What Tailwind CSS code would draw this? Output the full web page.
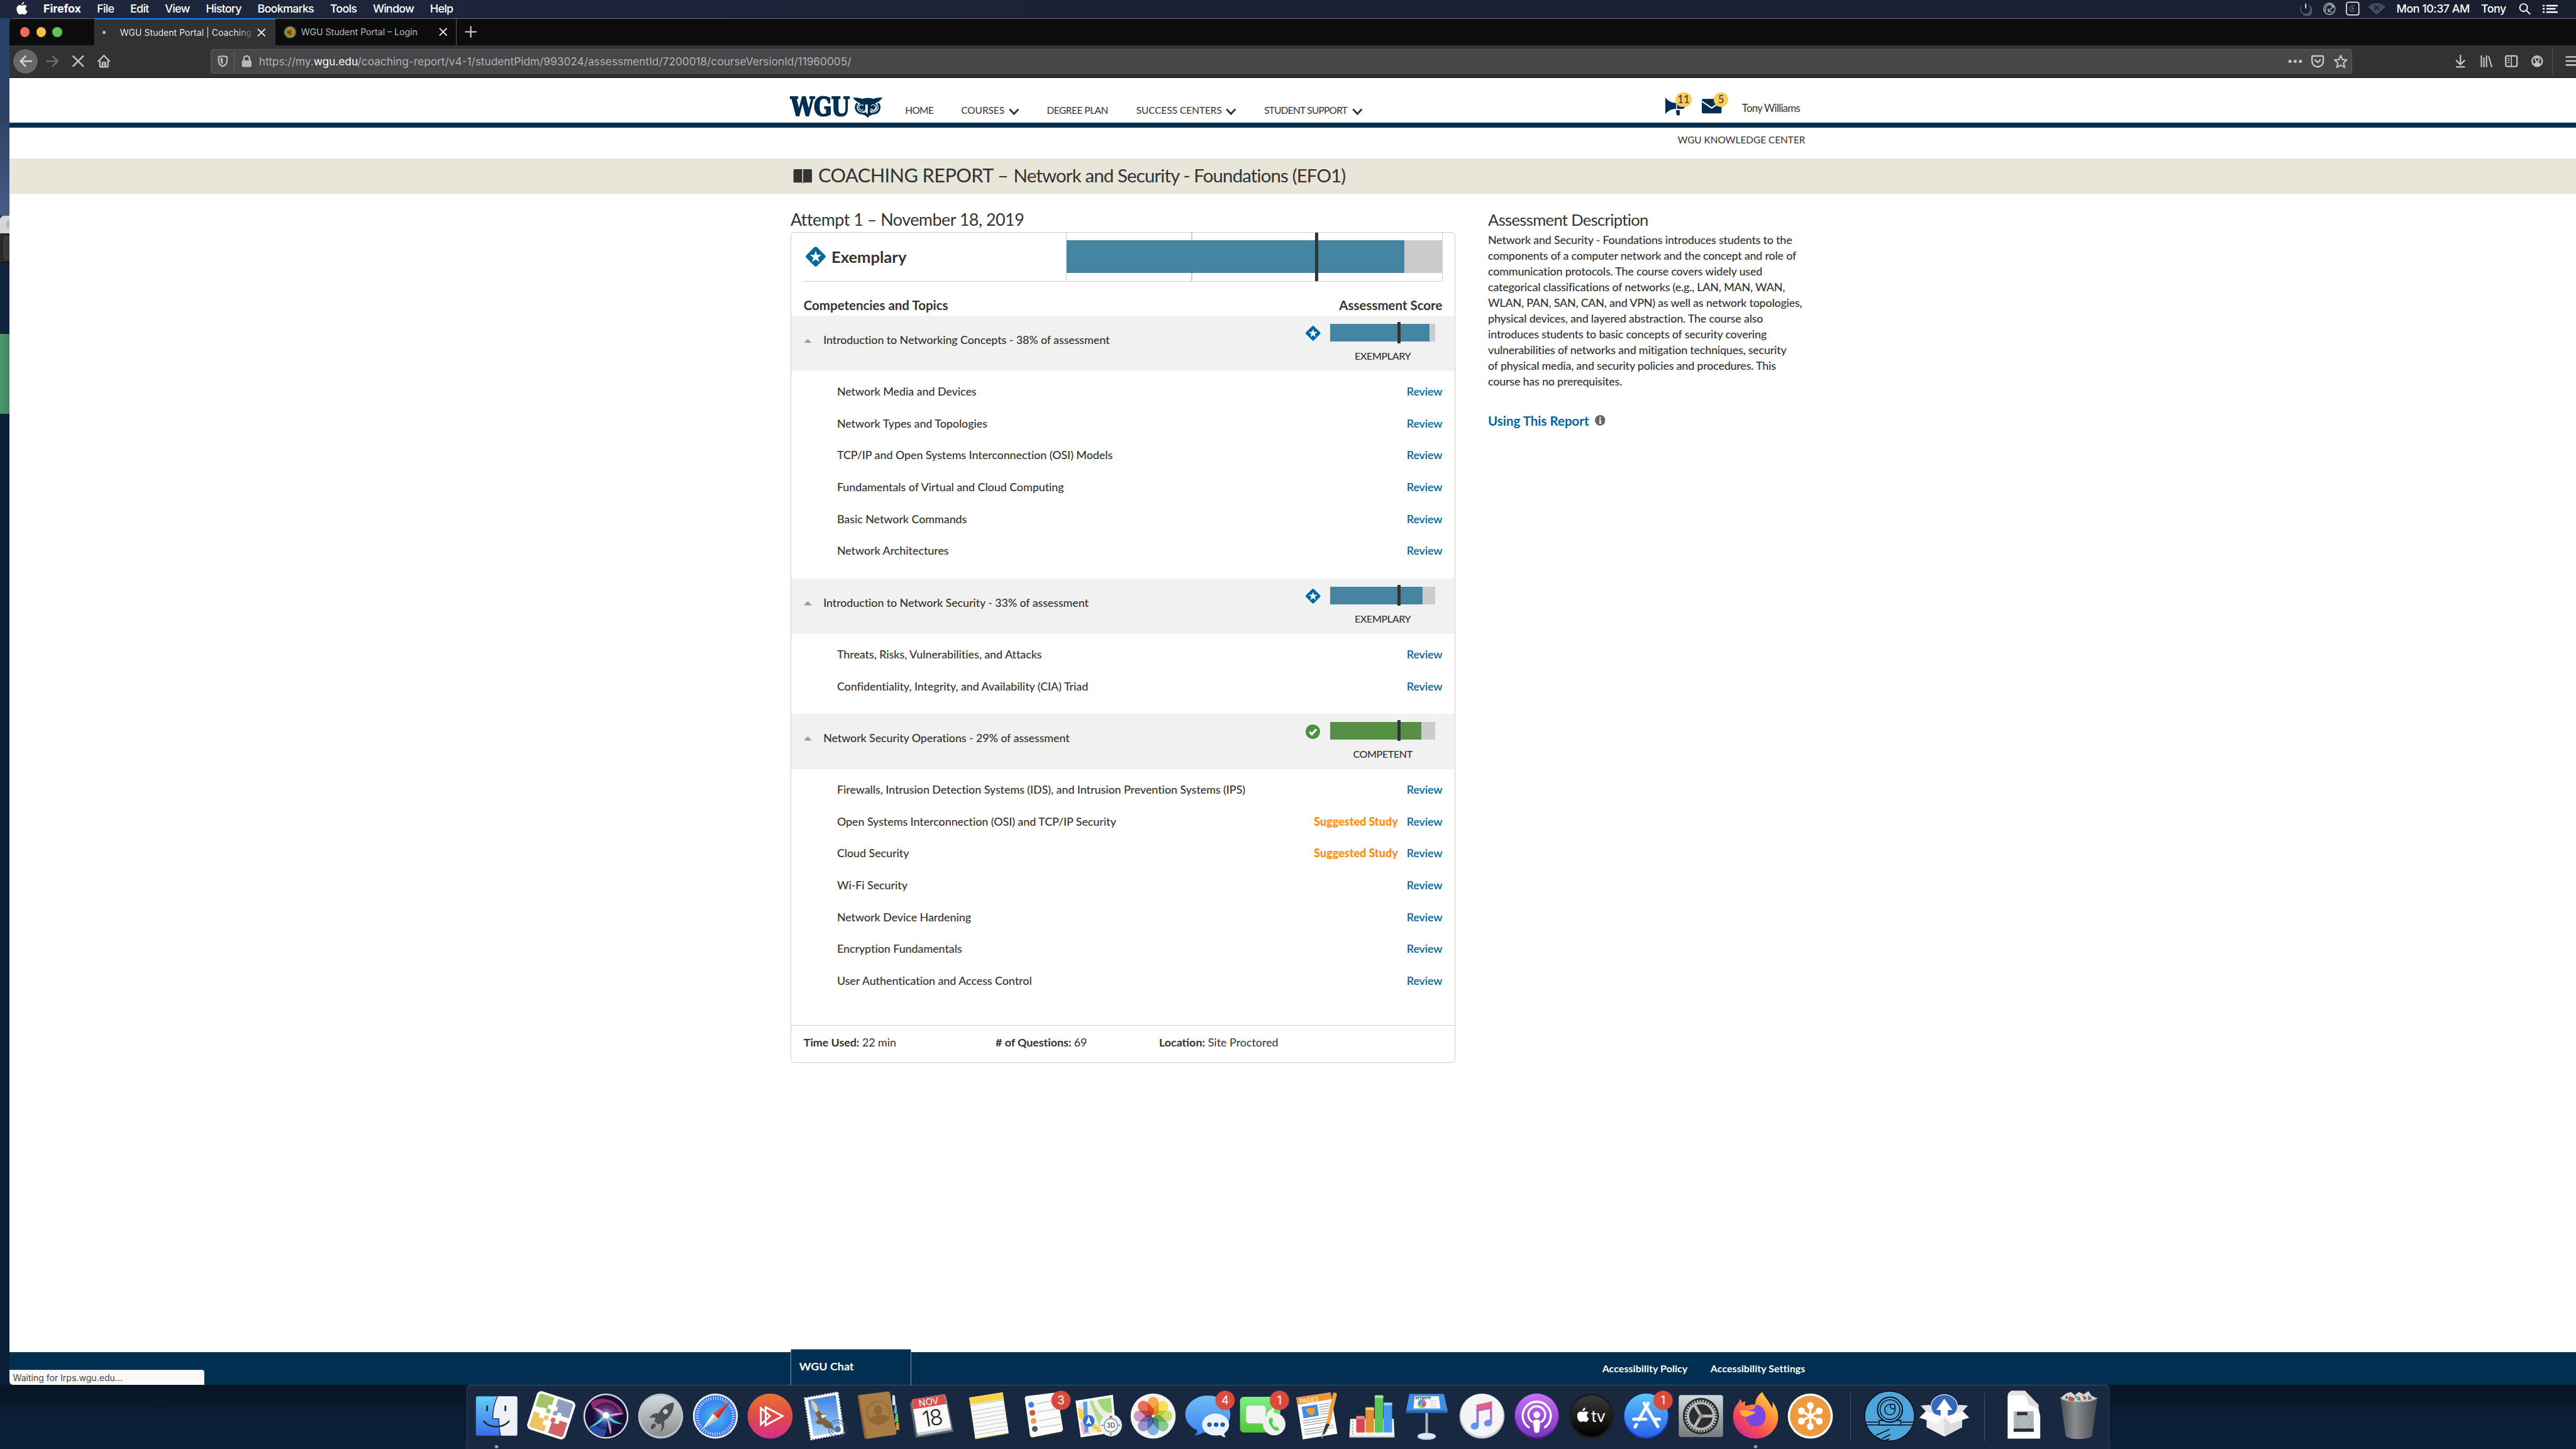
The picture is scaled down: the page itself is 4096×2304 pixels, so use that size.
<!DOCTYPE html>
<html lang="en">
<head>
<meta charset="utf-8">
<title>WGU Student Portal | Coaching Report</title>
<script src="https://cdn.jsdelivr.net/npm/@tailwindcss/browser@4"></script>
</head>
<body class="[zoom:1.28] w-[3200px] h-[1800px] overflow-hidden relative flex flex-col bg-[#0b2139] font-['Lato',sans-serif] text-[#333]">

<!-- macOS menu bar -->
<header class="h-[23px] shrink-0 bg-linear-to-r from-[#1d263c] to-[#191e2f] text-white text-[14px] leading-[22px] font-['Inter',sans-serif] font-medium tracking-[-0.600px] flex items-start">
  <svg class="ml-[20.5px] mt-[2px] w-[14px] h-[16px] shrink-0" viewBox="0 0 14 16" fill="#fff"><path d="M9.6 0c.1 1.8-1.300 3.500-3 3.500C6.400 1.800 8 .2 9.600 0zM7.200 4.700c.8 0 1.500-.8 3-.8 1.200 0 2.300.6 3 1.600-2.600 1.500-2.200 5 .6 6.100-.6 1.700-2 4.200-3.400 4.200-1.100 0-1.500-.7-2.900-.7s-1.800.7-2.900.7C2.600 15.800.3 12.200.3 9c0-3.100 1.900-5 4-5 1.300 0 2.200.7 2.900.7z"/></svg>
  <b class="ml-[19.500px] w-[48px] font-bold tracking-[-0.1px]">Firefox</b>
  <nav class="ml-[18.500px] flex gap-[20.200px]"><span>File</span><span>Edit</span><span>View</span><span>History</span><span>Bookmarks</span><span>Tools</span><span>Window</span><span>Help</span></nav>
  <div class="ml-auto flex items-start">
    <svg class="w-[16px] h-[22px] mr-[13px]" viewBox="0 0 16 22"><circle cx="8" cy="11.500" r="6.300" fill="none" stroke="#555a6a" stroke-width="1.300" stroke-dasharray="29 10" transform="rotate(-55 8 11.500)"/><path d="M8 4.500v6" stroke="#fff" stroke-width="1.300"/><path d="M14 9a6 6 0 0 1-9 8" fill="none" stroke="#555a6a" stroke-width="2.200"/></svg>
    <svg class="w-[17px] h-[22px] mr-[12px]" viewBox="0 0 17 22" fill="none" stroke="#a9adb8" stroke-width="1.200"><circle cx="8.500" cy="11" r="7"/><path d="M3.500 14C3 8.500 6 5 11.500 5.500c2.500.5 2.500 3.500 0 4.500L6.500 14M7 10.500v4h5M10 7l5 2"/></svg>
    <svg class="w-[17px] h-[22px] mr-[10px]" viewBox="0 0 17 22" fill="none"><rect x=".8" y="2.800" width="15.400" height="15.700" rx="2.500" stroke="#fff" stroke-width="1.200"/><path d="M11 8.200a3.600 3.600 0 1 0 0 5M8 9.500l2 1.200-2 1.200z" stroke="#565b6b" stroke-width="1.200"/></svg>
    <svg class="w-[22px] h-[22px] mr-[14px]" viewBox="0 0 22 22"><path d="M0 8.500C6 2.500 16 2.500 22 8.500L11 18.300z" fill="#474c5d"/><path d="M8 7l6 5.500M14 7l-6 5.500" stroke="#1a1f30" stroke-width="1.500"/></svg>
    <span class="w-[105px] tracking-[-0.400px]">Mon 10:37 AM</span>
    <span class="w-[46.500px] tracking-[-0.400px]">Tony</span>
    <svg class="w-[16px] h-[22px] mr-[14px]" viewBox="0 0 16 22" fill="none" stroke="#fff" stroke-width="1.500"><circle cx="6" cy="9.500" r="4.700"/><path d="M9.500 13l4.700 4.800"/></svg>
    <svg class="w-[19px] h-[22px] mr-[22.500px]" viewBox="0 0 19 22" fill="#fff"><path d="M0 6h2.500v2H0zM4.500 6H19v2H4.500zM0 10h2.500v2H0zM4.500 10H16v2H4.500zM0 14h2.500v2H0zM4.500 14H19v2H4.500z"/></svg>
  </div>
</header>

<div class="h-[1697px] shrink-0 flex">
  <!-- desktop showing beside the window -->
  <div class="w-[12px] shrink-0 flex flex-col">
    <div class="h-[245px] bg-linear-to-b from-[#27426d] via-[#2f4266] to-[#455c86]"></div>
    <div class="h-[22px] bg-[#d6d6d6] rounded-tl-[5px] flex justify-end items-center"><i class="w-[4px] h-[11px] rounded-l-full bg-[#b5b5b5]"></i></div>
    <div class="h-[36.500px] bg-[#29292a] border-b border-black flex justify-end items-center"><i class="w-[7px] h-[30px] rounded-l-[3px] border border-r-0 border-[#4b4b4b] bg-[#3a3a3c]"></i></div>
    <div class="h-[88px] bg-[#12233f]"></div>
    <div class="h-[99.500px] bg-linear-to-r from-[#4b976b] to-[#458560]"></div>
    <div class="flex-1 bg-linear-to-b from-[#0b2038] to-[#0a1f38]"></div>
  </div>

  <!-- Firefox window -->
  <div class="flex-1 min-w-0 relative flex flex-col bg-white rounded-tl-[5px] rounded-bl-[5px] overflow-hidden">
    <!-- tab strip -->
    <div class="h-[33px] shrink-0 bg-[#0c0c0d] border-t border-[#6f6f72] flex items-stretch font-['Inter',sans-serif] text-[11px] leading-[16px]">
      <div class="w-[106px] shrink-0 flex items-center gap-[8px] pl-[13px] border-r border-[#3c3c3e]">
        <i class="size-[12px] rounded-full bg-[#ed6a5e]"></i><i class="size-[12px] rounded-full bg-[#f5bf4f]"></i><i class="size-[12px] rounded-full bg-[#61c554]"></i>
      </div>
      <div class="w-[224px] shrink-0 -mt-px bg-[#323234] border-t-2 border-[#0a84ff] flex items-center text-[#f9f9fa] pl-[9px]">
        <i class="size-[4px] rounded-full bg-[#b9b9ba]"></i>
        <span class="ml-[18px] w-[164px] pt-px whitespace-nowrap bg-linear-to-r from-[#f9f9fa] from-88% to-[#5a5a5c] bg-clip-text text-transparent">WGU Student Portal | Coaching</span>
        <svg class="ml-[6px] size-[12px]" viewBox="0 0 12 12" stroke="#f9f9fa" stroke-width="1.300" stroke-linecap="round"><path d="M1.800 1.800l8.400 8.400M10.200 1.800l-8.400 8.400"/></svg>
      </div>
      <div class="w-[225.500px] shrink-0 border-r border-[#5a5a5c] flex items-center text-[#b9b9ba] pl-[10px]">
        <svg class="size-[16px]" viewBox="0 0 16 16"><circle cx="8" cy="8" r="7.300" fill="#b8841c" stroke="#1d4d70" stroke-width="1.400"/><circle cx="8" cy="8" r="5.800" fill="none" stroke="#d8c69a" stroke-width=".5" stroke-dasharray=".8 .8"/><path d="M4 5l1.300 4.500L7 5.500l1.300 4 1.500-4.500M10 10.500a2 2 0 1 1-.2-3M9 10h1.300" stroke="#3c3d2b" fill="none" stroke-width=".8"/></svg>
        <span class="ml-[6px] pt-px">WGU Student Portal – Login</span>
        <svg class="ml-auto mr-[10.500px] size-[12px]" viewBox="0 0 12 12" stroke="#f9f9fa" stroke-width="1.300" stroke-linecap="round"><path d="M1.800 1.800l8.400 8.400M10.200 1.800l-8.400 8.400"/></svg>
      </div>
      <svg class="ml-[9.500px] mt-[8.500px] size-[15px]" viewBox="0 0 15 15" stroke="#c4c4c5" stroke-width="1.800" stroke-linecap="round"><path d="M7.500 1v13M1 7.500h13"/></svg>
    </div>

    <!-- navigation toolbar -->
    <div class="h-[41px] shrink-0 bg-[#323234] border-b border-[#0c0c0d] flex items-center font-['Inter',sans-serif]">
      <div class="ml-[4px] size-[32px] rounded-full bg-[#676768] border border-[#232325] flex items-center justify-center">
        <svg class="size-[16px]" viewBox="0 0 16 16" fill="none" stroke="#d5d5d6" stroke-width="2" stroke-linecap="round" stroke-linejoin="round"><path d="M15 8H1.500M7.500 1.800L1.300 8l6.200 6.200"/></svg>
      </div>
      <svg class="ml-[9px] size-[16px]" viewBox="0 0 16 16" fill="none" stroke="#6d6d6f" stroke-width="2" stroke-linecap="round" stroke-linejoin="round"><path d="M1 8h13.500M8.500 1.800L14.700 8l-6.200 6.200"/></svg>
      <svg class="ml-[16px] size-[16px]" viewBox="0 0 16 16" fill="none" stroke="#c4c4c5" stroke-width="2" stroke-linecap="round"><path d="M1.800 1.800l12.400 12.400M14.200 1.800L1.800 14.200"/></svg>
      <svg class="ml-[16px] size-[16px]" viewBox="0 0 16 16" fill="none" stroke="#c4c4c5" stroke-width="1.800" stroke-linejoin="round" stroke-linecap="round"><path d="M1 8.200L8 1l7 7.200M3 8v6.300c0 .5.300.8.800.8h8.400c.5 0 .8-.3.800-.8V8M6 15v-4.500c0-.6.400-1 1-1h2c.6 0 1 .4 1 1V15"/><circle cx="8.700" cy="12.300" r=".4"/></svg>
      <div class="ml-[125px] w-[2661px] h-[30px] rounded-[3px] bg-[#474749] border border-[#5c5c5e] flex items-center text-[13.500px] text-[#b1b1b3]">
        <svg class="ml-[6px] size-[16px]" viewBox="0 0 16 16"><path d="M8 1.900c2 0 4.300.3 5.200.7v4.900c0 3.600-2.200 5.900-5.200 7-3-1.100-5.200-3.400-5.200-7V2.600C3.700 2.200 6 1.900 8 1.900z" fill="none" stroke="#b9b9ba" stroke-width="1.800"/><path d="M8 4.200c-1.200 0-2.200.1-2.800.3V7.500c0 2.400 1.100 3.600 2.800 4.600z" fill="#b9b9ba"/></svg>
        <i class="ml-[6px] w-px h-[21px] bg-[#6a6a6c]"></i>
        <svg class="ml-[7px] size-[16px]" viewBox="0 0 16 16"><path d="M4.500 8V5a3.500 3.500 0 0 1 7 0v3" fill="none" stroke="#b9b9ba" stroke-width="2"/><rect x="2" y="7" width="12" height="8.300" rx="1.500" fill="#b9b9ba"/></svg>
        <span class="ml-[7px] pt-[.5px] whitespace-nowrap">https://my.<span class="text-[#f9f9fa]">wgu.edu</span>/coaching-report/v4-1/studentPidm/993024/assessmentId/7200018/courseVersionId/11960005/</span>
        <svg class="ml-auto size-[18px]" viewBox="0 0 18 18" fill="#c4c4c5"><circle cx="2.500" cy="9" r="2"/><circle cx="9" cy="9" r="2"/><circle cx="15.500" cy="9" r="2"/></svg>
        <svg class="ml-[11px] size-[16px]" viewBox="0 0 16 16" fill="none" stroke="#c4c4c5" stroke-width="1.900" stroke-linejoin="round" stroke-linecap="round"><path d="M1 2.500c0-.6.400-1 1-1h12c.6 0 1 .4 1 1V8a7 7 0 0 1-14 0z"/><path d="M4.800 6.500L8 9.700l3.200-3.200"/></svg>
        <svg class="ml-[12px] mr-[5px] size-[17px]" viewBox="0 0 16 16" fill="none" stroke="#c4c4c5" stroke-width="1.600" stroke-linejoin="round"><path d="M8 1l2.100 4.700 5 .5-3.800 3.400 1.200 5.200L8 12.200l-4.500 2.600 1.200-5.200L.9 6.200l5-.5z"/></svg>
      </div>
      <svg class="ml-[126px] size-[16px]" viewBox="0 0 16 16" fill="none" stroke="#c4c4c5" stroke-width="1.800" stroke-linecap="round" stroke-linejoin="round"><path d="M8 .8v11M3 7.300l5 5 5-5M3 15.200h10"/></svg>
      <svg class="ml-[16px] size-[16px]" viewBox="0 0 16 16" fill="none" stroke="#c4c4c5" stroke-width="1.700" stroke-linecap="round"><path d="M2 1.500v13.300M5.200 4v10.800M8.400 1.500v13.300M11.200 2.500l3.600 12.300"/></svg>
      <svg class="ml-[16px] size-[16px]" viewBox="0 0 16 16" fill="none" stroke="#c4c4c5" stroke-width="1.800"><rect x="1" y="1.500" width="14" height="13" rx="1.800"/><path d="M8 2v12" stroke-width="1.300"/><path d="M3.300 4.700h2.500M3.300 7.200h2.500M3.300 9.700h2.500" stroke-width="1.200"/></svg>
      <svg class="ml-[16px] size-[16px]" viewBox="0 0 16 16"><circle cx="8" cy="8" r="6.300" fill="none" stroke="#c4c4c5" stroke-width="1.900"/><circle cx="8" cy="6" r="2.500" fill="none" stroke="#c4c4c5" stroke-width="1.600"/><path d="M3.500 12.500C4.500 10 6 9.300 8 9.300s3.500.7 4.500 3.200C10.500 15 5.500 15 3.500 12.500z" fill="#c4c4c5"/></svg>
      <i class="ml-[10px] w-px h-[34px] bg-[#555557]"></i>
      <svg class="ml-[15px] w-[14px] h-[14px] shrink-0" viewBox="0 0 14 14" stroke="#c4c4c5" stroke-width="2" stroke-linecap="round"><path d="M2 2h16M2 7h16M2 12h16"/></svg>
    </div>

    <!-- WGU site header -->
    <div class="h-[55px] shrink-0 flex items-start pl-[970px]">
      <div class="mt-[23.500px] w-[116px] h-[26px] flex shrink-0 text-[#002f51]">
        <span class="w-[77.500px] h-[26px] font-['DejaVu_Serif',serif] font-bold text-[31.500px] leading-[25px] tracking-[-1px] origin-left scale-x-[.84] [-webkit-text-stroke:1.500px_#002f51]">WGU</span>
        <svg class="w-[37px] h-[26px] mt-[.5px] shrink-0" viewBox="0 0 37 26"><g fill="none" stroke="#002f51" stroke-width="2.500"><path d="M5.800 7.200C1.500 12 4.500 19.800 12 19.800l4 1.500"/><path d="M31.200 7.200C35.500 12 32.500 19.800 25 19.800l-4 1.500"/></g><circle cx="11.300" cy="12.500" r="5" fill="#002f51"/><circle cx="25.900" cy="12.500" r="5" fill="#002f51"/><path d="M0 .3C4 0 8 .3 11.700 1.700 15 .2 22 0 25.300 1.700 29 .2 33 0 37 .3c-2.500 3.200-5.500 5.200-8.500 6.900L25 8.500c-3 1.500-4 4-3.500 7.500l1.500 4.700-4.500 4.600-4.300-4.600L15.500 16c.5-3.500-.5-6-3.500-7.500L8.500 7.200C5.500 5.500 2.500 3.500 0 .3z" fill="#002f51"/><path d="M14 10.200A3.300 3.300 0 1 0 13.500 15M23.400 10.200A3.300 3.300 0 1 1 23.900 15" transform="translate(-.6)" fill="none" stroke="#fff" stroke-width="1"/><path d="M28.500 10.500A3.300 3.300 0 1 1 23 13.500" fill="none" stroke="#fff" stroke-width="1"/><path d="M15.600 9.500c0-1.100 2.900-1.100 2.900 0V21l-2.900-3.200z" fill="#fff"/></svg>
      </div>
      <nav class="flex items-start pt-[30px] text-[12px] leading-[20px] whitespace-nowrap">
        <a class="ml-[26.500px] w-[36px] pt-[.5px] tracking-[-0.500px]">HOME</a>
        <a class="ml-[33.500px] w-[59px]">COURSES</a>
        <svg class="mt-[7.500px] w-[13px] h-[9px]" viewBox="0 0 13 9" fill="none" stroke="#333" stroke-width="2.200"><path d="M1 1.200l5.500 5.900L12 1.200"/></svg>
        <a class="ml-[34.500px] w-[77px] pt-[.5px] tracking-[-0.340px]">DEGREE PLAN</a>
        <a class="ml-[34px] w-[111.500px]">SUCCESS CENTERS</a>
        <svg class="mt-[7.500px] w-[13px] h-[9px]" viewBox="0 0 13 9" fill="none" stroke="#333" stroke-width="2.200"><path d="M1 1.200l5.500 5.900L12 1.200"/></svg>
        <a class="ml-[34.500px] w-[109.500px] tracking-[-0.530px]">STUDENT SUPPORT</a>
        <svg class="mt-[7.500px] w-[13px] h-[9px]" viewBox="0 0 13 9" fill="none" stroke="#333" stroke-width="2.200"><path d="M1 1.200l5.500 5.900L12 1.200"/></svg>
      </nav>
      <div class="ml-[374px] mt-[18px] w-[47px] h-[30px] relative">
        <svg class="w-[26px] h-[30px]" viewBox="0 0 26 30" fill="#002f51"><path d="M1.500 6.300c3.500 4.500 8 6.800 13.500 6.800V20.500c-5.500 0-10 2-13.500 6.500zM16.200 13.100h6.300a3.500 3.500 0 0 1 0 7.400h-6.300zM14.500 22h5v5.500c0 1.500-3.500 1.500-4 0z"/></svg>
        <span class="absolute left-[14px] top-0 w-[21px] h-[18px] rounded-full bg-[#fdcb5a] text-[13px] leading-[18px] text-center">11</span>
      </div>
      <div class="mt-[18px] w-[50px] h-[30px] relative">
        <svg class="w-[25px] h-[27px]" viewBox="0 0 25 27"><rect y="8" width="24.500" height="18" rx="2" fill="#002f51"/><path d="M0 11l12.200 8.300L24.500 11" fill="none" stroke="#fff" stroke-width="1.600"/></svg>
        <span class="absolute left-[15px] top-0 w-[18px] h-[18px] rounded-full bg-[#fdcb5a] text-[13px] leading-[18px] text-center">5</span>
      </div>
      <span class="mt-[28px] text-[13px] leading-[20px] tracking-[-0.500px] whitespace-nowrap">Tony Williams</span>
    </div>
    <div class="h-[7px] shrink-0 bg-[#002f51]"></div>
    <div class="h-[38px] shrink-0 pr-[957.500px] pt-[5px] text-right text-[12px] leading-[20px]">WGU KNOWLEDGE CENTER</div>
    <div class="h-[44px] shrink-0 bg-[#e8e5d9] pl-[973px] pb-[1.500px] flex items-center text-[24px] leading-[28px] whitespace-nowrap">
      <svg class="w-[24px] h-[18px] mt-[2.500px] mr-[7.500px]" viewBox="0 0 24 18" fill="#333"><path d="M2 0h8.500c.6 0 .9.400.9.900V16.500l.3.300h.6l.3-.3V.900c0-.5.300-.9.900-.9H22c1 0 1.500.6 1.500 1.500v13.700c0 .9-.6 1.500-1.500 1.500h-8.500c-.3.900-2.700.9-3 0H2c-.9 0-1.500-.6-1.500-1.500V1.500C.5.600 1 0 2 0z"/></svg>
      <span class="w-[222.500px] tracking-[-0.450px]">COACHING REPORT</span><span class="w-[20px]">–</span><span class="text-[23px] tracking-[-0.670px]">Network and Security - Foundations (EFO1)</span>
    </div>

    <!-- report -->
    <div class="flex-1 pl-[970px] pt-[19px] flex items-start">
      <section class="w-[826px]">
        <h2 class="h-[28px] pt-[1px] text-[21px] leading-[24px] tracking-[-0.390px]">Attempt 1 – November 18, 2019</h2>
        <div class="h-[1032px] border border-[#ccc] rounded-[5px] flex flex-col">
          <div class="ml-[15.500px] w-[794px] h-[61px] border-b border-[#ccc] flex">
            <div class="w-[326px] flex items-center pl-[2.500px] text-[20px] font-bold pt-[.5px]">
              <svg class="size-[25px] mr-[7px]" viewBox="0 0 24 24"><path d="M10.500.8a2.200 2.200 0 0 1 3 0l9.700 9.700a2.200 2.200 0 0 1 0 3l-9.700 9.700a2.200 2.200 0 0 1-3 0L.8 13.500a2.200 2.200 0 0 1 0-3z" fill="#0067a0"/><path d="M12 5l1.700 4.900 5.300.1-4.200 3.200 1.500 5.100L12 15.300l-4.300 3 1.500-5.100L5 10l5.300-.1z" fill="#fff"/></svg>Exemplary
            </div>
            <div class="flex-1 relative border-x border-[#ccc] flex items-center">
              <i class="absolute left-[155px] inset-y-0 w-px bg-[#ccc]"></i>
              <div class="relative w-full h-[41px] bg-[#ccc]"><div class="h-full bg-[#4585a1]" style="width:90%"></div></div>
              <i class="absolute left-[308.500px] inset-y-0 w-[4px] bg-[#333]"></i>
            </div>
          </div>
          <div class="mx-[15.500px] h-[42.500px] pt-[19.500px] flex justify-between text-[16px] leading-[20px] font-bold"><span>Competencies and Topics</span><span>Assessment Score</span></div>
          <div id="sections"></div>
          <div class="flex-1 border-t border-[#ccc] flex pt-[11px] pl-[15.500px] text-[14px] leading-[20px]">
            <span class="w-[238.500px] tracking-[-0.050px]"><b>Time Used:</b> 22 min</span><span class="w-[203px] tracking-[-0.050px]"><b># of Questions:</b> 69</span><span><b>Location:</b> Site Proctored</span>
          </div>
        </div>
      </section>
      <aside class="ml-[40.500px] w-[420px]">
        <h2 class="h-[28.500px] pt-[1px] text-[20px] leading-[24px] tracking-[-0.520px]">Assessment Description</h2>
        <p class="text-[14px] font-medium leading-[19.560px] tracking-[-0.160px] whitespace-nowrap">Network and Security - Foundations introduces students to the<br>components of a computer network and the concept and role of<br>communication protocols. The course covers widely used<br>categorical classifications of networks (e.g., LAN, MAN, WAN,<br>WLAN, PAN, SAN, CAN, and VPN) as well as network topologies,<br>physical devices, and layered abstraction. The course also<br>introduces students to basic concepts of security covering<br>vulnerabilities of networks and mitigation techniques, security<br>of physical media, and security policies and procedures. This<br>course has no prerequisites.</p>
        <div class="mt-[29.500px] flex items-center text-[16px] leading-[20px] font-bold text-[#0067a0]">Using This Report
          <svg class="ml-[7px] mb-[2px] size-[13px]" viewBox="0 0 13 13"><circle cx="6.500" cy="6.500" r="6.500" fill="#666"/><circle cx="6.500" cy="3.400" r="1.150" fill="#fff"/><path d="M5 5.400h2.500v4.300h.8v1H5v-1h.7V6.400H5z" fill="#fff"/></svg>
        </div>
      </aside>
    </div>

    <!-- site footer -->
    <footer class="h-[40px] shrink-0 bg-[#002f51] flex items-center justify-end pr-[957.500px] gap-[28.500px] text-[12.500px] tracking-[0.040px] font-bold text-white">
      <span>Accessibility Policy</span><span>Accessibility Settings</span>
    </footer>
    <div class="absolute left-[970px] bottom-0 w-[150px] h-[44.500px] bg-[#002f51] border border-b-0 border-[#7f97a8] rounded-t-[2px] pl-[10px] pt-[11.500px] text-[14px] leading-[20px] font-bold text-white">WGU Chat</div>
    <div class="absolute left-0 bottom-0 w-[242px] h-[18.500px] bg-[#f9f9fa] border-t border-r border-[#d0d4d8] rounded-tr-[3px] pl-[4px] font-['Inter',sans-serif] text-[11px] leading-[18.500px] text-[#454545]">Waiting for lrps.wgu.edu...</div>
  </div>
</div>

<!-- dock area -->
<div class="h-[80px] shrink-0 bg-linear-to-b from-[#081624] via-[#0a1e35] to-[#0b2139] pl-[580px]">
  <div id="dock" class="w-[2040.500px] h-[82px] bg-[#182840] border border-b-0 border-t-[#475161] border-x-[#35435a] rounded-t-[5px] flex pl-[2px] font-['Inter',sans-serif]">
    <svg class="w-[68px] h-[80px] shrink-0" viewBox="0 0 68 80"><defs><linearGradient id="fi" x2="0" y2="1"><stop stop-color="#62cff9"/><stop offset="1" stop-color="#3a6bea"/></linearGradient></defs><rect x="8.400" y="13.500" width="51.400" height="48.800" rx="2" fill="url(#fi)"/><path d="M35.200 13.500C31 22 29.500 32 29.400 41.300H37c0 7.700.5 14.700 2.200 21h18.600a2 2 0 0 0 2-2V15.500a2 2 0 0 0-2-2z" fill="#eef1f6"/><path d="M22.300 26v5M45 26v5" stroke="#1c2a3a" stroke-width="2.200" stroke-linecap="round"/><path d="M29.400 41.300H37c0 7.700.5 14.700 2.200 21M35.200 13.500C31 22 29.500 32 29.400 41.300" fill="none" stroke="#1c2a3a" stroke-width="1"/><path d="M18 44.500c8 9 23.500 9 31.500 0" fill="none" stroke="#1c2a3a" stroke-width="2" stroke-linecap="round"/><ellipse cx="34" cy="76" rx="2.200" ry="2" fill="#8fa3bf"/></svg>
    <svg class="w-[68px] h-[80px] shrink-0" viewBox="0 0 68 80"><g transform="rotate(18 34 37)"><rect x="9" y="12" width="50" height="50" rx="6" fill="#fff"/><path d="M12 18a3 3 0 0 1 3-3h16v17H12z" fill="#a2c46c"/><path d="M36 15h17a3 3 0 0 1 3 3v16H36z" fill="#8f9fbf"/><path d="M12 39h20v20H15a3 3 0 0 1-3-3z" fill="#edc462"/><path d="M37 40h19v16a3 3 0 0 1-3 3H37z" fill="#d16468"/><path d="M27 25h12v6h7v14H37v6H27v-7h-7V31h7z" fill="#fff"/><circle cx="29" cy="33" r="3" fill="#a2c46c"/><circle cx="38" cy="33" r="3" fill="#8f9fbf"/><circle cx="29" cy="42" r="3" fill="#edc462"/><circle cx="38" cy="42" r="3" fill="#d16468"/></g></svg>
    <svg class="w-[68px] h-[80px] shrink-0" viewBox="0 0 68 80"><defs><radialGradient id="si"><stop stop-color="#fff"/><stop offset=".25" stop-color="#8fd0e6"/><stop offset=".6" stop-color="#3c3a8c"/><stop offset="1" stop-color="#150f38"/></radialGradient></defs><circle cx="34" cy="38" r="28" fill="#d5d7db"/><circle cx="34" cy="38" r="26" fill="#170f35"/><path d="M15 21c12-9 34-4 41 14-8 4-14 4-22 4S17 32 15 21z" fill="#b8367e" opacity=".75"/><path d="M12 52c8-2 14-9 22-12 2 8 1 18-2 23-8 0-16-4-20-11z" fill="#2d5cc0" opacity=".8"/><circle cx="34" cy="38" r="17" fill="url(#si)" opacity=".6"/><path d="M13 52c10-6 16-12 21-18 5 6 13 12 22 14-10 0-16-3-22-9-6 6-12 11-21 13z" fill="#5ef0dc" opacity=".85"/><path d="M34 38c-3-6-9-10-15-10 5 5 10 9 15 10zm0 0c3 8 3 16 6 23 2-9-1-17-6-23zm0 0c5-2 12-5 22-3-8 2-15 4-22 3z" fill="#e3b5e8" opacity=".85"/><circle cx="34" cy="37" r="4" fill="#fff"/></svg>
    <svg class="w-[68px] h-[80px] shrink-0" viewBox="0 0 68 80"><defs><linearGradient id="la" x2="0" y2="1"><stop stop-color="#d3dde2"/><stop offset="1" stop-color="#8b8d8d"/></linearGradient></defs><circle cx="34" cy="38" r="28" fill="#b9c3c8"/><circle cx="34" cy="38" r="25.500" fill="url(#la)"/><path d="M50.500 21c-9 1-15 6-19 13.500-5-.5-9 1.500-11.500 6 3-1 5.500-.8 7.500.2l-1.500 4 5 3.800 3.500-1.500c1.300 2.500 1 6.500-1.500 11 5-3 6.500-8 5-13.500 8-5.500 12.500-13 12.500-23.500zM25.500 47c-3 1-4 4-3.500 7.500 3-.5 5.500-2.500 6.500-5.500z" fill="#4d5254"/><circle cx="40" cy="32.500" r="3.800" fill="#bfcace" stroke="#34393b"/></svg>
    <svg class="w-[68px] h-[80px] shrink-0" viewBox="0 0 68 80"><defs><radialGradient id="sa"><stop stop-color="#51c3ea"/><stop offset="1" stop-color="#2e6ef0"/></radialGradient></defs><circle cx="34" cy="38" r="28" fill="#e6e8ea"/><circle cx="34" cy="38" r="25.700" fill="url(#sa)"/><circle cx="34" cy="38" r="22.500" fill="none" stroke="#e9f3fb" stroke-width="4" stroke-dasharray=".9 2.040"/><path d="M51.500 20.500L37.600 41.300 31 35z" fill="#e8443d"/><path d="M51.500 20.500L37.600 41.300 34.300 38z" fill="#c42c2b"/><path d="M17 55l13.800-20 6.800 6.300z" fill="#f4f4f4"/><path d="M17 55l17.300-17 3.300 3.300z" fill="#b9bcc0"/></svg>
    <svg class="w-[68px] h-[80px] shrink-0" viewBox="0 0 68 80"><defs><linearGradient id="pl" x2="0" y2="1"><stop stop-color="#e8742f"/><stop offset=".5" stop-color="#e04a4a"/><stop offset="1" stop-color="#d2308c"/></linearGradient></defs><circle cx="34" cy="38" r="28" fill="url(#pl)"/><path d="M28.500 27v22.500L49.500 38zM22.500 28v20.500l11.500-10.500z" fill="none" stroke="#fff" stroke-width="2.200"/></svg>
    <svg class="w-[68px] h-[80px] shrink-0" viewBox="0 0 68 80"><defs><linearGradient id="ma" x2="0" y2="1"><stop stop-color="#3f80de"/><stop offset="1" stop-color="#a7d5f6"/></linearGradient></defs><path d="M9 16L50 8.500 57.500 59.500 17 67z" fill="#fff" stroke="#fff" stroke-width="2" stroke-dasharray="2.200 1.300"/><path d="M13 18L47.500 12 53.500 57 20 63z" fill="url(#ma)"/><path d="M17 18c5 2 8 6 10 14l4 4 4-1 1 3-2 3c6 3 11 9 12 15-2-1-3-2-4-3-4 1-9-1-11-5-4 1-7 0-9-2 2-2 4-3 4-5-4-6-8-15-9-23z" fill="#7c623e"/><path d="M17 18c5 2 8 6 9 13l-3 3c-4-5-6-10-6-16z" fill="#d9cbb0"/><path d="M29 37l6-1 1 2-5 3z" fill="#f3eee4"/><circle cx="50" cy="54" r="11" fill="none" stroke="#35506f" stroke-width="1.200" opacity=".7"/><circle cx="50" cy="54" r="8" fill="none" stroke="#35506f" opacity=".6"/><circle cx="50" cy="54.500" r="4" fill="#35506f" opacity=".7"/></svg>
    <svg class="w-[68px] h-[80px] shrink-0" viewBox="0 0 68 80"><path d="M50 12l3 .5 1 12h-4z" fill="#dfe6ea"/><path d="M53 24l2 .5.8 10H52z" fill="#59b9e0"/><path d="M54 35l3 .5.5 10H53z" fill="#5fc45c"/><path d="M55 46l3 .5L58.500 55H54z" fill="#e6941f"/><path d="M7 14c0-1 .8-2 2-2L44 7.500c2 0 3 1 3.200 3L55 58c0 2-1 3-2 3.400L18 66.300c-1.500 0-2.500-.5-2.800-2z" fill="#a97c45"/><path d="M7 14l2 .3 9 52c-1.500 0-2.500-.5-2.800-2z" fill="#8a6233"/><circle cx="32.500" cy="34" r="14.300" fill="none" stroke="#8e6737" stroke-width="1.300"/><ellipse cx="32" cy="30.500" rx="5" ry="5.800" fill="#8e6737"/><path d="M21.500 42c4-5.500 18-7.500 23-3-2.500 9.500-18 12.500-23 3z" fill="#8e6737"/></svg>
    <svg class="w-[68px] h-[80px] shrink-0" viewBox="0 0 68 80"><path d="M3.500 21L49 13l9 44.500L11 65z" fill="#5d6670"/><path d="M6 17.500L47 11l8.500 44-42 7.500z" fill="#c9cdd0"/><path d="M6 17.500L47 11l8 41-42.500 7z" fill="#fbfbfb"/><path d="M6 17.500L47 11l2 12L8 29.500z" fill="#d8504b"/><g transform="rotate(-9 28 40)"><text x="30" y="24.500" font-size="11.500" fill="#fff" text-anchor="middle">NOV</text><text x="31" y="50.500" font-size="27" font-weight="300" fill="#222" text-anchor="middle" letter-spacing="-1.500">18</text></g></svg>
    <svg class="w-[68px] h-[80px] shrink-0" viewBox="0 0 68 80"><path d="M9.500 15.500L51 8.500 58.500 60 17 67z" fill="#b58f25"/><path d="M9.500 15L51 8.500 58.500 59 17 66z" fill="#fafafa"/><path d="M9.500 15L51 8.500l1.500 8.500L10.800 23.500z" fill="#f6d34b"/><path d="M11 25l41.500-7" stroke="#888" stroke-width=".8" stroke-dasharray="1 1"/><path d="M12.500 32l41.500-7M13.300 37l41.500-7M14 42l41.500-7M14.800 47l41-7M15.500 52l41-7M16 57l41-7M16.500 61.500l41-7" stroke="#c4c4c4" stroke-width=".8"/></svg>
    <svg class="w-[68px] h-[80px] shrink-0" viewBox="0 0 68 80"><path d="M12 15L50 9l9 48c0 2-1 3-3 3.500L20 66.500c-2 0-3-1-3-2.500z" fill="#2b2b2b"/><path d="M10.500 16c0-1.500 1-2.500 2.500-3L47.500 9c2-.2 3 .8 3.500 2.500L58 54c0 2-1 3-2.500 3.500L20 64.500c-1.500 0-2.500-1-3-2.500z" fill="#fafafa"/><path d="M24 23l25-5M26 33l25-4M28 44l26-5M30 52l26-4" stroke="#c2c2c2"/><circle cx="18.500" cy="24" r="3.600" fill="#3f7df0"/><circle cx="20" cy="34" r="3.600" fill="#d8534a"/><circle cx="21.500" cy="44" r="3.600" fill="#e6a14a"/><circle cx="23" cy="54" r="3.600" fill="#54585f"/><circle cx="55.500" cy="18.500" r="12" fill="#d94a3d"/><text x="55.500" y="23.600" font-size="14.500" fill="#fff" text-anchor="middle">3</text></svg>
    <svg class="w-[68px] h-[80px] shrink-0" viewBox="0 0 68 80"><path d="M5.500 19L52 11.500 56 58 12 64.500z" fill="#fff"/><path d="M8.500 21.500L49.500 15 53 55.500 14.500 61z" fill="#efece6"/><path d="M33 17.500L49.500 15l1.500 19c-9 0-15-6-18-16.500z" fill="#a3d77f"/><path d="M27 18.500c4 14 12 22 25 27v10L35 58c2-11-8-24-12-39z" fill="#a3d77f" opacity=".8"/><path d="M8.500 28l7 2 9 14 17 13-8 1-12-10L10 40z" fill="#f6cf4e"/><path d="M11 44l9 8 3 8-8.500 1z" fill="#f4b7c2"/><path d="M15 20.500l5-.8 1.500 38-4.500.8z" fill="#5f9be0"/><circle cx="22" cy="44" r="7.300" fill="#2d72d3"/><path d="M22 38.500l-3.500 10 3.500-2 3.500 2z" fill="#fff"/><circle cx="49.500" cy="49.500" r="13.700" fill="#eef0f2"/><circle cx="49.500" cy="49.500" r="8.300" fill="#fff" stroke="#7ca4b5" stroke-width="1.400"/><path d="M49.500 37l2 3h-4z" fill="#e02020"/><path d="M49.500 59v2.500M38 49.500h2M59 49.500h2" stroke="#333"/><text x="49.500" y="52.500" font-size="8" fill="#222" text-anchor="middle">3D</text></svg>
    <svg class="w-[68px] h-[80px] shrink-0" viewBox="0 0 68 80"><circle cx="34" cy="38" r="28" fill="#f3f3f2"/><g opacity=".9"><rect x="27" y="14" width="14" height="23" rx="7" fill="#f5a13a"/><rect class="mix-blend-multiply" x="27" y="14" width="14" height="23" rx="7" fill="#f3e04a" transform="rotate(45 34 38)"/><rect class="mix-blend-multiply" x="27" y="14" width="14" height="23" rx="7" fill="#c3dd62" transform="rotate(90 34 38)"/><rect class="mix-blend-multiply" x="27" y="14" width="14" height="23" rx="7" fill="#7cc48a" transform="rotate(135 34 38)"/><rect class="mix-blend-multiply" x="27" y="14" width="14" height="23" rx="7" fill="#73abe0" transform="rotate(180 34 38)"/><rect class="mix-blend-multiply" x="27" y="14" width="14" height="23" rx="7" fill="#9088c8" transform="rotate(225 34 38)"/><rect class="mix-blend-multiply" x="27" y="14" width="14" height="23" rx="7" fill="#c98fc3" transform="rotate(270 34 38)"/><rect class="mix-blend-multiply" x="27" y="14" width="14" height="23" rx="7" fill="#e8604c" transform="rotate(315 34 38)"/></g><circle cx="34" cy="38" r="1.500" fill="#fff"/></svg>
    <svg class="w-[68px] h-[80px] shrink-0" viewBox="0 0 68 80"><defs><linearGradient id="me" x2="0" y2="1"><stop stop-color="#6fbdf5"/><stop offset="1" stop-color="#3b82f4"/></linearGradient></defs><path d="M34 12.500c15.500 0 28 10.500 28 23.500S49.500 59 34 59c-2 0-4-.2-6-.5-2.500 2-6 3.300-10.500 3.500 2.500-2 3.500-4 3.500-6.300C12 52 6 44.500 6 36c0-13 12.500-23.500 28-23.500z" fill="url(#me)"/><path d="M43.500 35c9.500 0 17 6 17 13.700 0 4.500-2.500 8.300-6 10.800 0 2 .8 3.500 2 5-3-.5-5.500-1.500-7-3-2 .5-4 .7-6 .7-9.500 0-16.500-6-16.500-13.500S34 35 43.500 35z" fill="#e9f1f9"/><circle cx="36" cy="48.700" r="2.800" fill="#27579f"/><circle cx="44.300" cy="48.700" r="2.800" fill="#27579f"/><circle cx="52.500" cy="48.700" r="2.800" fill="#27579f"/><circle cx="55.500" cy="18.500" r="12" fill="#d94a3d"/><text x="55.500" y="23.600" font-size="14.500" fill="#fff" text-anchor="middle">4</text></svg>
    <svg class="w-[68px] h-[80px] shrink-0" viewBox="0 0 68 80"><defs><linearGradient id="ft" x2="0" y2="1"><stop stop-color="#7df08a"/><stop offset="1" stop-color="#53c637"/></linearGradient></defs><rect x="6" y="14" width="50" height="44.500" rx="5" fill="url(#ft)"/><rect x="13.500" y="25" width="24.500" height="22" rx="4" fill="#f2f3f1"/><path d="M39.500 33.500L48 27v18l-8.500-6z" fill="#f2f3f1"/><circle cx="48.500" cy="48" r="14" fill="#eef1ee"/><path d="M44 40c-3 1.500-3 5 0 10s7 7.500 10 5.500l1-1.500-3.500-3-2 1c-2-1.500-3.500-4-3.800-6l1.500-1.500-1-4.500z" fill="#53cf4b"/><circle cx="55" cy="18.500" r="12" fill="#d94a3d"/><text x="55" y="23.600" font-size="14.500" fill="#fff" text-anchor="middle">1</text></svg>
    <svg class="w-[68px] h-[80px] shrink-0" viewBox="0 0 68 80"><path d="M8 15L50.500 8.500 59 60 16 67z" fill="#fdfdfd"/><path d="M8 15L50.500 8.500l1.500 8.500L9.500 24z" fill="#f0953a"/><g transform="rotate(-9 20 20)"><text x="12" y="21.500" font-size="7.500" fill="#fff">PAGES</text></g><path d="M14.500 26.500L34 23.500l2 14L17 40.800z" fill="#3c8ee8"/><path d="M20 29c3-1 10-2 11 0 1 4-1 8-4 8-4 0-7-4-7-8z" fill="#f29a2e"/><path d="M36 24l14-2.300M36.500 27l14-2.300M37 30l14-2.300M37.500 33l14-2.300M38 36l14-2.300M16 44l37-6M16.500 47l37-6M17 50l30-5M17.500 55l37-6M18 58l37-6M18.500 61l28-4.500" stroke="#9a9a9a" stroke-width=".9"/><path d="M53.500 9.500c1-1.500 4.500-.8 5 1.500L49 50l-4-1z" fill="#eda23c"/><path d="M49.500 48l-4.500-1-5 14.500-1 5 3-4z" fill="#3a3a3a"/><path d="M41 60l-2 6.500 3.500-5z" fill="#d8dde0"/></svg>
    <svg class="w-[68px] h-[80px] shrink-0" viewBox="0 0 68 80"><path d="M7 41.500h54l1 21.500v1.500H6V63z" fill="#f3f3f3"/><path d="M6 63h56v1.500H6z" fill="#c4c4c4"/><rect x="14.500" y="38" width="10.500" height="20.500" rx="1.500" fill="#d94654"/><rect x="26" y="27" width="10.500" height="31.500" rx="1.500" fill="#e58c34"/><rect x="37.500" y="12" width="10.500" height="46.500" rx="1.500" fill="#5cc25a"/><rect x="48.500" y="21" width="10.500" height="37.500" rx="1.500" fill="#4796f0"/><path d="M14.500 38h10.500v3.500H14.500z" fill="#f08a90"/><path d="M26 27.500h10.500v3H26z" fill="#f9ca7a"/><path d="M37.500 12.500H48v3H37.500z" fill="#a3eaa4"/><path d="M48.500 21.500H59v3H48.500z" fill="#9cd4fa"/><path d="M10 44v1.500M10 48v1.500M10 52v1.500M10 56v1.500M10 59v1.500" stroke="#777"/></svg>
    <svg class="w-[68px] h-[80px] shrink-0" viewBox="0 0 68 80"><path d="M32.500 34h3v30h-3z" fill="#b4bac0"/><ellipse cx="34" cy="63.500" rx="11.500" ry="4" fill="#b9cde0"/><ellipse cx="34" cy="62.500" rx="11" ry="3.500" fill="#dbe7f1"/><path d="M12.500 10.500h43L60 31v3H8.500v-3z" fill="#3f8fe4"/><path d="M8.500 31H60v2.500H8.500z" fill="#2467ae"/><path d="M19 13.500h30l2 15H17.500z" fill="#fdfdfd"/><text x="20" y="17.500" font-size="4" font-weight="700" fill="#333">KEYNOTE</text><circle cx="28" cy="22.500" r="5.300" fill="#4aa3ee"/><path d="M28 22.500l5-1.500a5.300 5.300 0 0 1-3.500 6.500z" fill="#e8504b"/><path d="M28 22.500l1.500 5a5.300 5.300 0 0 1-6-2z" fill="#8bd34c"/><path d="M28 22.500v-5.300a5.300 5.300 0 0 1 5 3.800z" fill="#b070e0"/><path d="M38 19h8M38 21.500h8M38 24h8M38 26.500h8" stroke="#c7c7c7" stroke-width=".9"/></svg>
    <svg class="w-[68px] h-[80px] shrink-0" viewBox="0 0 68 80"><defs><linearGradient id="mu" x2="0" y2="1"><stop stop-color="#f25a6a"/><stop offset=".5" stop-color="#a66be0"/><stop offset="1" stop-color="#4aa0f0"/></linearGradient></defs><circle cx="34" cy="38" r="28" fill="#c5c9ce"/><circle cx="34" cy="36.800" r="26.500" fill="#f3f4f6"/><path d="M27 24l19.500-4.300V46c0 3-2 4.800-5 5-3.500.2-5.500-2.300-4.700-5 .7-2.300 3-3.600 7-3.800V29.500L30 32v17.500c0 3-2 5-5 5.200-3.500.2-5.500-2.200-4.800-5 .7-2.300 2.800-3.500 6.800-3.700z" fill="url(#mu)"/></svg>
    <svg class="w-[68px] h-[80px] shrink-0" viewBox="0 0 68 80"><defs><linearGradient id="po" x2="0" y2="1"><stop stop-color="#c573f2"/><stop offset="1" stop-color="#7a35bf"/></linearGradient></defs><circle cx="34" cy="38" r="28" fill="#571d99"/><circle cx="34" cy="37" r="27" fill="url(#po)"/><path d="M24 52a17.500 17.500 0 1 1 20 0M28 45a10.500 10.500 0 1 1 12 0" fill="none" stroke="#fff" stroke-width="2.600" stroke-linecap="round"/><circle cx="34" cy="36.500" r="4.200" fill="#fff"/><path d="M29.500 46c0-5 9-5 9 0L37 57c-.7 2.500-5.300 2.500-6 0z" fill="#fff"/></svg>
    <svg class="w-[68px] h-[80px] shrink-0" viewBox="0 0 68 80"><defs><linearGradient id="tv" x2="0" y2="1"><stop stop-color="#3a3a3a"/><stop offset="1" stop-color="#000"/></linearGradient></defs><circle cx="34" cy="38" r="28" fill="#1d1d1d"/><circle cx="34" cy="38" r="25.500" fill="url(#tv)"/><path d="M26.500 27.500c.2 2.300-1.500 4.300-3.700 4.300-.2-2.200 1.600-4.200 3.700-4.300zM23.500 33c1 0 1.800-.8 3.500-.8 1.300 0 2.500.6 3.200 1.800-2.800 1.700-2.400 5.600.7 6.800-.7 2.200-2.200 4.400-3.800 4.400-1.200 0-1.800-.7-3.200-.7s-2 .7-3.200.7c-2 0-4.400-4-4.400-7.400 0-3.300 2-5.400 4.200-5.400 1.400 0 2.200.6 3 .6z" fill="#fff"/><text x="42.500" y="45" font-size="20" fill="#fff" text-anchor="middle" letter-spacing="-.3">tv</text></svg>
    <svg class="w-[68px] h-[80px] shrink-0" viewBox="0 0 68 80"><defs><linearGradient id="as" x2="0" y2="1"><stop stop-color="#5ec4fa"/><stop offset="1" stop-color="#2a62ea"/></linearGradient></defs><circle cx="34" cy="38" r="28" fill="#1b3fce"/><circle cx="34" cy="37" r="27" fill="url(#as)"/><path d="M36.500 22L25 42.500M31.500 22l17 29M18.500 41.800h15M43 41.800h7.500M22 48.500l-1.800 3" stroke="#f4f8fd" stroke-width="4" stroke-linecap="round" fill="none"/><circle cx="55" cy="18.500" r="12" fill="#d94a3d"/><text x="55" y="23.600" font-size="14.500" fill="#fff" text-anchor="middle">1</text></svg>
    <svg class="w-[68px] h-[80px] shrink-0" viewBox="0 0 68 80"><defs><linearGradient id="pr" x2="0" y2="1"><stop stop-color="#cfdbe1"/><stop offset="1" stop-color="#77797a"/></linearGradient></defs><rect x="6.500" y="12" width="55" height="52" rx="3" fill="url(#pr)"/><circle cx="34" cy="38" r="22.500" fill="#2b2c2d"/><circle cx="34" cy="38" r="18.500" fill="none" stroke="#b5b8b9" stroke-width="3.500" stroke-dasharray="1.900 1.500"/><circle cx="34" cy="38" r="16" fill="none" stroke="#b5b8b9" stroke-width="3"/><path d="M34 38h15M34 38l-7.500-13M34 38l-7.500 13" stroke="#b5b8b9" stroke-width="3.600"/><circle cx="34" cy="38" r="3" fill="#8d9092"/></svg>
    <svg class="w-[68px] h-[80px] shrink-0" viewBox="0 0 68 80"><defs><linearGradient id="ff" x1="1" x2=".2" y2="1"><stop stop-color="#fff05a"/><stop offset=".4" stop-color="#ff8f3a"/><stop offset=".75" stop-color="#f4455a"/><stop offset="1" stop-color="#c52c9b"/></linearGradient></defs><path d="M42.500 8c2 6 7 9 12 20 1-2 .8-5 .3-8C60 27 62 33 62 39c0 15-12.500 27-28 27S6 54 6 39c0-7 2-13 7-18 .5-2 1.500-3.500 3-4 .2 2 .5 3.500 1 4.500 1.500-1 3-1.800 4.500-2-1 2-1 4.500 0 6 4-1 8-2 12-2 0-6 3-11.500 9-15.500z" fill="url(#ff)"/><path d="M34 24c8 0 12.500 7 12.500 14.500C46.500 46 41 51 34 51s-12-5.500-12-12c0-4 2-6.500 5-8 2-1 5-1 6-3z" fill="#7a48e0"/><path d="M14 31c4-1 8-.5 12 1l8 .5c-1 3-4 4-7 4.500-3 3-7 2-11-.5z" fill="#ffae42"/><ellipse cx="34" cy="76" rx="2.200" ry="2" fill="#8fa3bf"/></svg>
    <svg class="w-[68px] h-[80px] shrink-0" viewBox="0 0 68 80"><circle cx="34" cy="38" r="28" fill="#fff"/><circle cx="34" cy="38" r="25.300" fill="#ee9a40"/><path d="M34 26v24M23.500 32l21 12M23.500 44l21-12" stroke="#fff" stroke-width="2.600"/><g fill="#fff"><ellipse cx="34" cy="25" rx="4.200" ry="4.500"/><ellipse cx="34" cy="51" rx="4.200" ry="4.500"/><circle cx="23" cy="31.700" r="4.400"/><circle cx="45" cy="31.700" r="4.400"/><circle cx="23" cy="44.300" r="4.400"/><circle cx="45" cy="44.300" r="4.400"/></g></svg>
    <i class="ml-[16px] mr-[13.500px] mt-[10px] w-px h-[60px] bg-[#44536a]"></i>
    <svg class="w-[68px] h-[80px] shrink-0" viewBox="0 0 68 80"><circle cx="34" cy="38" r="31" fill="#4da5dc" stroke="#0b0f14" stroke-width="1.300"/><path d="M4.500 45.500h15.500M49 45.500h14.500M5.500 49h57" stroke="#0b0f14" stroke-width="1.300"/><path d="M21 43.500h27v5.500H21z" fill="#4da5dc" stroke="#0b0f14" stroke-width="1.300"/><circle cx="34.500" cy="30" r="15.500" fill="#4da5dc" stroke="#0b0f14" stroke-width="1.600"/><circle cx="34.500" cy="30" r="12.300" fill="none" stroke="#0b0f14" stroke-width="1.200"/><circle cx="34.500" cy="30" r="6.500" fill="none" stroke="#0b0f14" stroke-width="1.200"/><circle cx="38" cy="26" r="3" fill="#4da5dc" stroke="#0b0f14" stroke-width="1.200"/><path d="M17 62l17-7.500M25 66l10-5M29 68l5-2" stroke="#0b0f14" stroke-width="1.300"/></svg>
    <svg class="w-[68px] h-[80px] shrink-0" viewBox="0 0 68 80"><path d="M4.500 25l11-1 19 13-19 0zM63.500 25l-11-1-18 13 18 0z" fill="#e2e2e2"/><ellipse cx="34" cy="26" rx="16.500" ry="14.500" fill="#3468bd" stroke="#e8eef6"/><path d="M34 16.500L24 30.500h5.500V40h9v-9.500H44z" fill="#fff"/><path d="M12 39l22-1 22 1v13L34 63.500 12 52z" fill="#eeeeee"/><path d="M34 38l22 1v13L34 63.500z" fill="#dcdcdc"/><path d="M11 32l23 7-8 8.500L3 40zM57 32l-23 7 8 8.500L65 40z" fill="#fafafa"/></svg>
    <i class="ml-[15.500px] mr-[15px] mt-[10px] w-px h-[60px] bg-[#44536a]"></i>
    <svg class="w-[68px] h-[80px] shrink-0" viewBox="0 0 68 80"><path d="M18 6.500h17L52 24v40H14V10z" fill="#e4e4e4"/><path d="M13.500 12.500h20C43 17 54 28 54 40v26H13.500z" fill="#fff"/><path d="M36 12c1 5 3 8 4 13 6 0 10 2 13 8-1-9-9-18-17-21z" fill="#dcdcdc"/><rect x="21" y="32" width="25" height="25.500" rx="1" fill="#b0b8bc"/><rect x="25" y="33" width="13" height="4" fill="#2b2d2e"/><circle cx="34" cy="46" r="9" fill="none" stroke="#9aa3a8"/><rect x="21" y="53.500" width="25" height="4" fill="#26282a"/></svg>
    <svg class="w-[68px] h-[80px] shrink-0" viewBox="0 0 68 80"><defs><linearGradient id="tr"><stop stop-color="#4b4e50"/><stop offset=".4" stop-color="#8b8e90"/><stop offset=".7" stop-color="#686b6d"/><stop offset="1" stop-color="#47494b"/></linearGradient></defs><path d="M12 15l6-5 6-2 5 4 5-4 6 3 6-4 4 6 5 2v5H12z" fill="#d5d5d3"/><path d="M22 13l7 3-2 5-6-2zM38 12l6 3-3 4z" fill="#b0583a"/><path d="M28 12l6 2-3 3z" fill="#4aa3d8"/><path d="M18 12l4 4-5 1zM34 13l3 6-5-1zM46 12l5 5-6 1z" fill="#6a6d70"/><path d="M11 15c7 7 39 7 46 0l-6.500 47c-1 6-32 6-33 0z" fill="url(#tr)"/><path d="M11 15c7 7 39 7 46 0" fill="none" stroke="#a9abac" stroke-width="1.200"/></svg>
  </div>
</div>

<script>
// Competency groups: [title, level, score %, [topic, suggested?]...]
const groups = [
  ['Introduction to Networking Concepts - 38% of assessment', 'EXEMPLARY', 94.9, [['Network Media and Devices'], ['Network Types and Topologies'], ['TCP/IP and Open Systems Interconnection (OSI) Models'], ['Fundamentals of Virtual and Cloud Computing'], ['Basic Network Commands'], ['Network Architectures']]],
  ['Introduction to Network Security - 33% of assessment', 'EXEMPLARY', 88, [['Threats, Risks, Vulnerabilities, and Attacks'], ['Confidentiality, Integrity, and Availability (CIA) Triad']]],
  ['Network Security Operations - 29% of assessment', 'COMPETENT', 87, [['Firewalls, Intrusion Detection Systems (IDS), and Intrusion Prevention Systems (IPS)'], ['Open Systems Interconnection (OSI) and TCP/IP Security', 1], ['Cloud Security', 1], ['Wi-Fi Security'], ['Network Device Hardening'], ['Encryption Fundamentals'], ['User Authentication and Access Control']]],
];
const star = '<svg class="size-[18.500px] absolute right-[166.500px] top-[12.500px]" viewBox="0 0 24 24"><path d="M10.500.8a2.200 2.200 0 0 1 3 0l9.700 9.700a2.200 2.200 0 0 1 0 3l-9.700 9.700a2.200 2.200 0 0 1-3 0L.8 13.500a2.200 2.200 0 0 1 0-3z" fill="#0067a0"/><path d="M12 5l1.700 4.900 5.300.1-4.200 3.200 1.500 5.100L12 15.300l-4.300 3 1.500-5.100L5 10l5.300-.1z" fill="#fff"/></svg>';
const check = '<svg class="size-[18px] absolute right-[167px] top-[13px]" viewBox="0 0 18 18"><circle cx="9" cy="9" r="9" fill="#4f8f3f"/><path d="M4.800 9.200l3 3L13.300 6" fill="none" stroke="#fff" stroke-width="2.600"/></svg>';
document.getElementById('sections').innerHTML = groups.map(([title, level, score, topics], i) => `
  <div class="h-[69px] bg-[#f1f1f1] relative flex items-start pl-[15.500px] pt-[20px] text-[14px] font-medium leading-[20px]">
    <svg class="mt-[8.500px] w-[10px] h-[5px]" viewBox="0 0 10 5"><path d="M5 0l5 5H0z" fill="#999"/></svg>
    <span class="ml-[14.500px] pt-[.5px] tracking-[-0.080px]">${title}</span>
    ${i === 2 ? check : star}
    <div class="absolute right-[24.500px] top-[10px] w-[130px]">
      <div class="h-[22px] bg-[#ccc] relative"><div class="h-full ${i === 2 ? 'bg-[#559044]' : 'bg-[#4585a1]'}" style="width:${score}%"></div><i class="absolute left-[83px] -inset-y-[2px] w-[4px] bg-[#333]"></i></div>
      <div class="mt-[10.500px] text-center text-[12.500px] leading-[16px] tracking-[-0.270px]">${level}</div>
    </div>
  </div>
  <ul class="${i === 2 ? 'h-[317.500px]' : i === 1 ? 'h-[99px]' : 'h-[257.500px]'} pt-[5.500px] pl-[57px] pr-[15.500px] text-[14px]">
    ${topics.map(([t, s]) => `<li class="h-[39.550px] flex items-center gap-[11px]"><span class="mr-auto font-medium tracking-[-0.050px]">${t}</span>${s ? '<span class="font-extrabold text-[#f7941d] tracking-[-0.030px]">Suggested Study</span>' : ''}<a class="font-semibold text-[#0067a0] tracking-[-0.120px]">Review</a></li>`).join('')}
  </ul>`).join('');
</script>
</body>
</html>
